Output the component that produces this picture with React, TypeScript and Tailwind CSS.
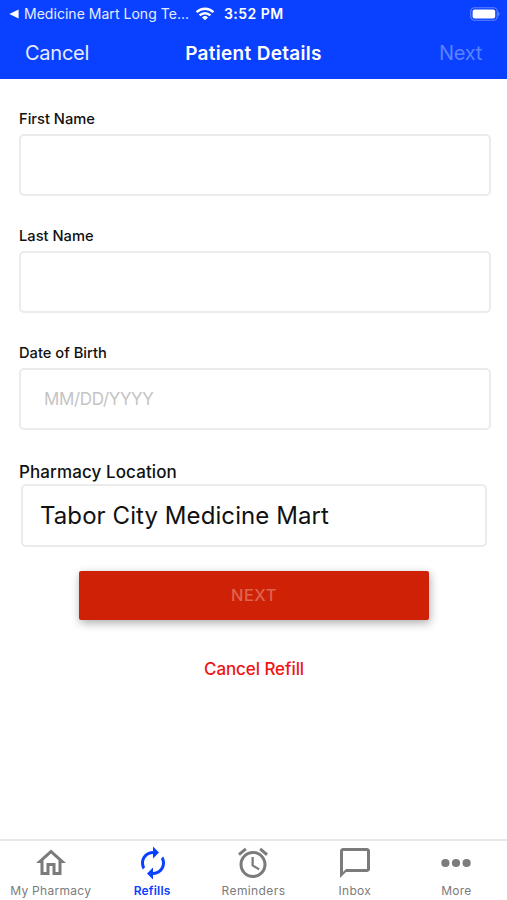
import { useState } from 'react';
import type { ReactNode } from 'react';
import { MdAccessAlarm, MdAutorenew, MdChatBubbleOutline, MdOutlineHome } from 'react-icons/md';
import { clsx } from 'clsx';

interface Tab {
  label: string;
  icon: ReactNode;
  className: string;
}

const MoreIcon = () => (
  <svg viewBox="0 0 36 36" className="w-9 h-9" fill="currentColor">
    <circle cx="7.4" cy="18" r="4.1" />
    <circle cx="18" cy="18" r="4.1" />
    <circle cx="28.6" cy="18" r="4.1" />
  </svg>
);

const TABS: Tab[] = [
  { label: 'My Pharmacy', icon: <MdOutlineHome className="w-9 h-9" />, className: 'tracking-[0.28px]' },
  { label: 'Refills', icon: <MdAutorenew className="w-9 h-9 ml-px" />, className: 'tracking-[0.2px]' },
  { label: 'Reminders', icon: <MdAccessAlarm className="w-9 h-9" />, className: 'tracking-[0.4px]' },
  { label: 'Inbox', icon: <MdChatBubbleOutline className="w-9 h-9" />, className: 'tracking-[0.3px]' },
  { label: 'More', icon: <MoreIcon />, className: 'tracking-[0.2px]' },
];

function StatusBar() {
  return (
    <div className="flex items-center h-[27px] pl-[9px] pr-[7px] text-white">
      <svg viewBox="0 0 10 10" className="w-2.5 h-2.5 shrink-0" fill="currentColor">
        <path d="M0.3 5 9.6 0.6v8.8z" />
      </svg>
      <span className="ml-[5px] w-[166px] shrink-0 whitespace-nowrap text-[14px] text-[#e6ecff] tracking-[0.03px]">Medicine Mart Long Te...</span>
      <svg viewBox="0 0 20 15" className="ml-[5px] w-5 h-[15px] shrink-0" fill="none" stroke="currentColor" strokeWidth="2.5">
        <path d="M1.6 6.2a12 12 0 0 1 16.8 0" />
        <path d="M4.6 9.4a7.7 7.7 0 0 1 10.8 0" />
        <path d="M10 14.2 7 11.4a4.3 4.3 0 0 1 6 0z" fill="currentColor" stroke="none" />
      </svg>
      <span className="ml-[9px] whitespace-nowrap text-[14px] font-semibold tracking-[0.45px]">3:52 PM</span>
      <svg viewBox="0 0 30 14" className="ml-auto w-[30px] h-3.5 shrink-0">
        <rect x="0.75" y="0.75" width="26.5" height="12.5" rx="3.8" fill="none" stroke="white" strokeOpacity="0.35" strokeWidth="1.2" />
        <rect x="2.6" y="2.5" width="22.6" height="9" rx="2" fill="white" />
        <path d="M28.2 4.8c1.8.9 1.8 3.5 0 4.4z" fill="white" fillOpacity="0.4" />
      </svg>
    </div>
  );
}

interface FieldProps {
  label: string;
  placeholder?: string;
  value: string;
  onChange: (value: string) => void;
}

function Field({ label, placeholder, value, onChange }: FieldProps) {
  return (
    <label className="block h-[117px]">
      <span className="block h-[25px] text-[14.7px] leading-[20px] font-medium text-[#111]">{label}</span>
      <input
        type="text"
        value={value}
        placeholder={placeholder}
        onChange={(e) => onChange(e.target.value)}
        className="block w-[472px] h-[62px] px-[23px] rounded-[5px] border-2 border-[#ebebeb] text-[17px] tracking-[-0.35px] placeholder:text-[#c4c4c4] outline-none"
      />
    </label>
  );
}

export default function App() {
  const [firstName, setFirstName] = useState('');
  const [lastName, setLastName] = useState('');
  const [birthDate, setBirthDate] = useState('');
  const [activeTab, setActiveTab] = useState('Refills');

  return (
    <div className="flex flex-col w-full h-[900px] overflow-hidden bg-white font-[Inter,sans-serif]">
      {/* Header */}
      <header className="h-[79px] shrink-0 bg-[#0a40ff] text-white">
        <StatusBar />
        <div className="grid grid-cols-[1fr_auto_1fr] items-center h-[52px] px-[25px]">
          <button className="justify-self-start text-[20px] tracking-[-0.25px] text-[#e6ecff]">Cancel</button>
          <h1 className="pt-[2px] text-[19px] font-semibold tracking-[0.3px]">Patient Details</h1>
          <button className="justify-self-end text-[20px] tracking-[-0.3px] text-[#5c82ff]">Next</button>
        </div>
      </header>

      {/* Form */}
      <main className="flex-1 pt-[30px] pl-[19px]">
        <Field label="First Name" value={firstName} onChange={setFirstName} />
        <Field label="Last Name" value={lastName} onChange={setLastName} />
        <Field label="Date of Birth" placeholder="MM/DD/YYYY" value={birthDate} onChange={setBirthDate} />

        <p className="h-[24px] text-[17px] leading-[24px] font-medium tracking-[0.1px] text-[#111]">Pharmacy Location</p>
        <button className="flex items-center ml-[2px] w-[466px] h-[63px] pl-[17px] rounded-[5px] border-2 border-[#ebebeb] text-[24px] tracking-[0.08px] text-[#111]">
          Tabor City Medicine Mart
        </button>

        <button className="block mt-[24px] ml-[60px] w-[350px] h-[49px] rounded-[2px] bg-[#cf2106] text-[16.5px] font-medium tracking-[0.5px] text-[#dd6450] shadow-[1px_3px_10px_rgba(0,0,0,0.33)]">
          NEXT
        </button>
        <button className="block mt-[37px] ml-[185px] h-[26px] text-[17px] font-medium tracking-[-0.08px] text-[#f01414] whitespace-nowrap">
          Cancel Refill
        </button>
      </main>

      {/* Tab bar */}
      <nav className="grid grid-cols-5 h-[61px] shrink-0 border-t-2 border-[#e8e8e8] bg-white">
        {TABS.map((tab) => (
          <button
            key={tab.label}
            onClick={() => setActiveTab(tab.label)}
            className={clsx(
              'flex flex-col items-center pt-[4px]',
              tab.label === activeTab ? 'text-[#0a40ff] font-semibold' : 'text-[#7b7b7b]'
            )}
          >
            {tab.icon}
            <span className={clsx('mt-px text-[12px] leading-[18px] whitespace-nowrap', tab.className)}>{tab.label}</span>
          </button>
        ))}
      </nav>
    </div>
  );
}
